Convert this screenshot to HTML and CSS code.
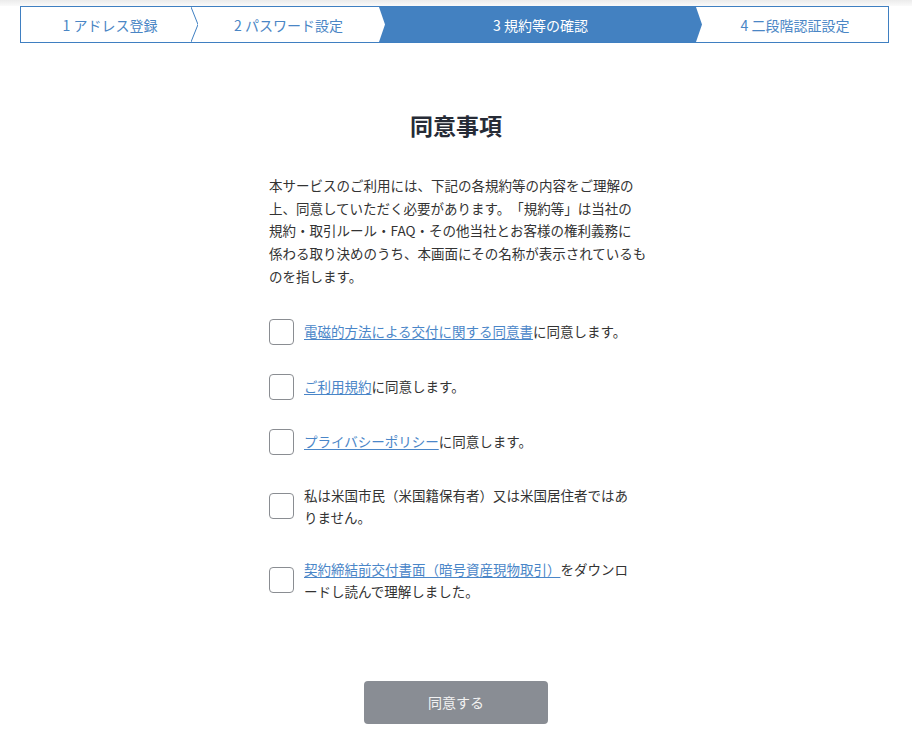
FILE: index.html
```html
<!DOCTYPE html>
<html lang="ja">
<head>
<meta charset="utf-8">
<title>同意事項</title>
<link rel="stylesheet" href="styles.css">
</head>
<body>
<div class="topshade"></div>
<nav class="steps">
  <div class="step step-1">1 アドレス登録</div>
  <svg class="sep sep-line" viewBox="0 0 7 35" preserveAspectRatio="none"><polyline points="0,0 7,17.5 0,35" fill="none" stroke="#3f7fc1" stroke-width="1" vector-effect="non-scaling-stroke"/></svg>
  <div class="step step-2">2 パスワード設定</div>
  <svg class="sep sep-in" viewBox="0 0 6 35" preserveAspectRatio="none"><polygon points="0,0 6,17.5 0,35" fill="#fff"/></svg>
  <div class="step step-3 active">3 規約等の確認</div>
  <svg class="sep sep-out" viewBox="0 0 6 35" preserveAspectRatio="none"><polygon points="0,0 6,17.5 0,35" fill="#4381c1"/></svg>
  <div class="step step-4">4 二段階認証設定</div>
</nav>

<main class="content">
  <h1 class="title">同意事項</h1>
  <p class="lead">本サービスのご利用には、下記の各規約等の内容をご理解の<br>上、同意していただく必要があります。「規約等」は当社の<br>規約・取引ルール・FAQ・その他当社とお客様の権利義務に<br>係わる取り決めのうち、本画面にその名称が表示されているも<br>のを指します。</p>

  <ul class="agree-list">
    <li class="agree-item"><span class="box"></span><span class="label"><a href="#">電磁的方法による交付に関する同意書</a>に同意します。</span></li>
    <li class="agree-item"><span class="box"></span><span class="label"><a href="#">ご利用規約</a>に同意します。</span></li>
    <li class="agree-item"><span class="box"></span><span class="label"><a href="#">プライバシーポリシー</a>に同意します。</span></li>
    <li class="agree-item"><span class="box"></span><span class="label">私は米国市民（米国籍保有者）又は米国居住者ではあ<br>りません。</span></li>
    <li class="agree-item"><span class="box"></span><span class="label"><a href="#">契約締結前交付書面（暗号資産現物取引）</a>をダウンロ<br>ードし読んで理解しました。</span></li>
  </ul>

  <div class="actions"><button class="btn" type="button">同意する</button></div>
</main>
</body>
</html>
```
FILE: styles.css
```css
html, body {
  margin: 0;
  padding: 0;
  background: #fff;
}
body {
  font-family: "Noto Sans CJK JP", "Noto Sans", "Liberation Sans", sans-serif;
  color: #333;
  text-spacing-trim: space-all;
}
.topshade {
  height: 6px;
  background: linear-gradient(#ebebeb, #fafafa);
}
.steps {
  display: flex;
  height: 35px;
  margin: 0 23px 0 20px;
  border: 1px solid #3f7fc1;
  background: #fff;
}
.step {
  display: flex;
  align-items: center;
  justify-content: center;
  font-size: 14px;
  color: #4a86c5;
  white-space: nowrap;
}
.step-1 { width: 170px; padding-left: 8px; box-sizing: border-box; }
.step-2 { width: 181px; }
.step-3 { width: 311px; }
.step-4 { flex: 1; }
.step.active {
  background: #4381c1;
  color: #fff;
}
.sep {
  display: block;
  height: 35px;
  flex: none;
}
.sep-line { width: 7px; background: #fff; }
.sep-in { width: 6px; background: #4381c1; }
.sep-out { width: 6px; background: #fff; }

.content {
  width: 374px;
  margin: 0 auto;
}
.title {
  margin: 65px 0 0;
  text-align: center;
  font-size: 23px;
  line-height: 34px;
  font-weight: 700;
  color: #262b36;
}
.lead {
  margin: 32px 0 0;
  font-size: 13.5px;
  line-height: 22.7px;
  white-space: nowrap;
  color: #333;
}
.agree-list {
  list-style: none;
  margin: 31px 0 0;
  padding: 0;
  display: flex;
  flex-direction: column;
  gap: 29px;
}
.agree-item {
  display: flex;
  align-items: center;
  gap: 10px;
  min-height: 25px;
}
.box {
  flex: none;
  width: 23px;
  height: 24px;
  border: 1px solid #8a8d92;
  border-radius: 4px;
  background: #fff;
}
.label {
  font-size: 13.5px;
  line-height: 22.5px;
  white-space: nowrap;
  color: #333;
}
.label a {
  color: #4a86c8;
  text-decoration: underline;
  text-underline-offset: 2px;
}
.actions {
  display: flex;
  justify-content: center;
  margin-top: 78px;
}
.btn {
  width: 184px;
  height: 43px;
  border: none;
  border-radius: 4px;
  background: #898d94;
  color: #f2f2f2;
  font-family: inherit;
  font-size: 14px;
  cursor: default;
}
```
